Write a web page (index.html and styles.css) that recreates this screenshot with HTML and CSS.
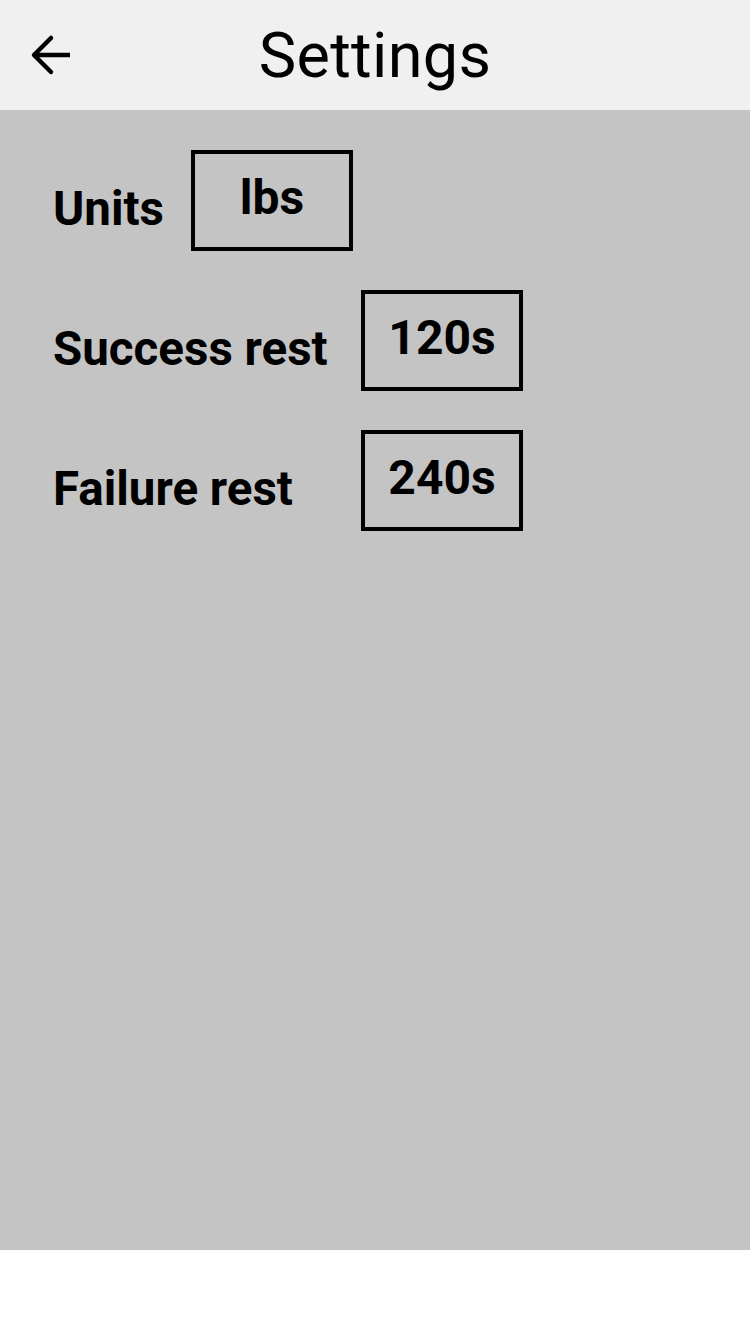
FILE: index.html
```html
<!DOCTYPE html>
<html>
<head>
<meta charset="utf-8">
<link rel="stylesheet" href="styles.css">
</head>
<body>
<div class="app">
  <header class="topbar">
    <div class="back">
      <svg class="back-icon" width="60" height="60" viewBox="0 0 60 60">
        <path d="M50 30 H13" stroke="#000" stroke-width="4.5" fill="none"/>
        <path d="M31 13 L14 30 L31 47" stroke="#000" stroke-width="4.5" fill="none" stroke-linecap="round" stroke-linejoin="round"/>
      </svg>
    </div>
    <h1 class="title">Settings</h1>
    <div></div>
  </header>
  <main class="content">
    <div class="row">
      <span class="label label-units">Units</span>
      <div class="value">lbs</div>
    </div>
    <div class="row">
      <span class="label label-rest">Success rest</span>
      <div class="value">120s</div>
    </div>
    <div class="row">
      <span class="label label-rest">Failure rest</span>
      <div class="value">240s</div>
    </div>
  </main>
</div>
</body>
</html>
```
FILE: styles.css
```css
html, body {
  margin: 0;
  padding: 0;
  background: #ffffff;
  font-family: Roboto, "Liberation Sans", sans-serif;
  color: #000;
}
.app {
  width: 750px;
  display: flex;
  flex-direction: column;
}
.topbar {
  height: 110px;
  background: #f0f0f0;
  display: grid;
  grid-template-columns: 1fr auto 1fr;
  align-items: center;
}
.back {
  display: flex;
  align-items: center;
  padding-left: 20px;
}
.back-icon {
  display: block;
}
.title {
  margin: 0;
  font-weight: 400;
  font-size: 63px;
  line-height: 1;
  letter-spacing: 0.3px;
}
.content {
  height: 1140px;
  box-sizing: border-box;
  background: #c4c4c4;
  padding: 40px 0 0 53px;
  display: flex;
  flex-direction: column;
  gap: 39px;
}
.row {
  display: flex;
  align-items: flex-start;
}
.label {
  font-weight: 700;
  font-size: 47.5px;
  line-height: 47.5px;
  padding-top: 36px;
  white-space: nowrap;
}
.label-units {
  width: 138px;
}
.label-rest {
  width: 308px;
}
.value {
  width: 162px;
  height: 101px;
  box-sizing: border-box;
  border: 4px solid #000;
  font-weight: 700;
  font-size: 48px;
  line-height: 48px;
  padding-top: 20px;
  text-align: center;
}
```
